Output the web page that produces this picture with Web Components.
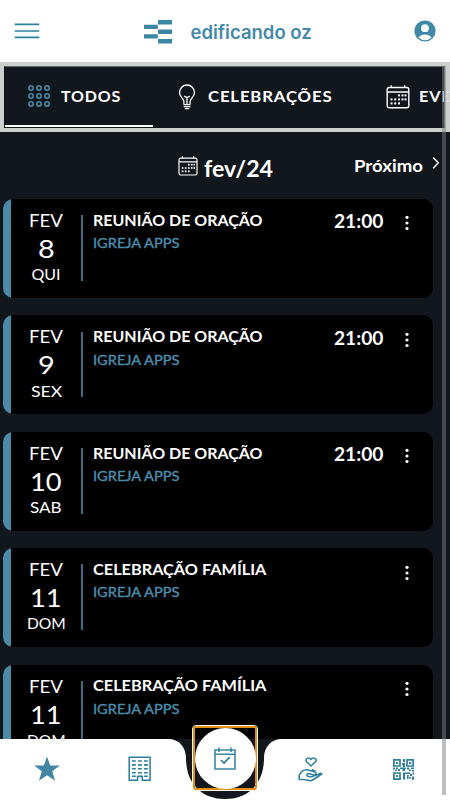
<!DOCTYPE html>
<html lang="pt-BR">
<head>
<meta charset="utf-8">
<title>edificando oz</title>
<style>
html,body{margin:0;height:100%;overflow:hidden;background:#12171e}
</style>
</head>
<body>
<agenda-app></agenda-app>
<script>
const ICONS = {
  menu: ['0 0 26 16', '<path d="M.7 1.4H25.3M.7 8H25.3M.7 14.4H25.3" stroke="#2c819f" stroke-width="1.7"/>'],
  logo: ['0 0 28 24', '<path d="M14 0h14v4.5H14zM0 4.8h13.8v4.3H0zM14 9.6h14v4.4H14zM0 14.2h13.8v4.3H0zM14 19h14v4.4H14z" fill="#3b87a3"/>'],
  user: ['0 0 22 22', '<defs><clipPath id="c"><circle cx="11" cy="11" r="9.2"/></clipPath></defs><circle cx="11" cy="11" r="10.6" fill="#3d89a6"/><g clip-path="url(#c)" fill="#fff"><circle cx="11" cy="8.2" r="3.9"/><ellipse cx="11" cy="19" rx="7.2" ry="4.4"/></g>'],
  grid: ['0 0 22 22', [3,11,19].map(y=>[3,11,19].map(x=>`<circle cx="${x}" cy="${y}" r="2.2" fill="none" stroke="#4b8eac" stroke-width="1.5"/>`).join('')).join('')],
  bulb: ['0 0 18 26', '<path d="M5.9 20V17.5C5.8 14.500 1.500 12.700 1.500 8.500A7.400 7.400 0 0 1 16.500 8.500C16.500 12.700 12.200 14.500 12.100 17.500V20M9 20V13.500M6.200 12.200 9 13.600 11.800 12.200" fill="none" stroke="#fff" stroke-width="1.3"/><path d="M5.500 20.600H12.500M5.700 22.700H12.300M6.800 24.600H11.200" stroke="#fff" stroke-width="1.300"/>'],
  calendar: ['0 0 24 24', '<rect x="1.200" y="2.500" width="21.600" height="20.300" rx="2" fill="none" stroke="#fff" stroke-width="1.400"/><path d="M1 7H23M5.200 .3V3M18.800 .3V3" stroke="#fff" stroke-width="1.300"/><g fill="#fff">' + [[13,10],[16.500,10],[19.500,10],[5.500,14],[9.200,14],[13,14],[16.500,14],[19.500,14],[5.500,18],[9.200,18],[13,18]].map(p=>`<rect x="${p[0]-1}" y="${p[1]-.6}" width="2" height="2"/>`).join('') + '</g>'],
  next: ['0 0 8 14', '<path d="M1.200 1.500 6.300 6.800 1.200 12.200" fill="none" stroke="#fff" stroke-width="1.400"/>'],
  dots: ['0 0 4 16', '<g fill="#fff"><circle cx="2" cy="2.300" r="1.600"/><circle cx="2" cy="8" r="1.600"/><circle cx="2" cy="13.500" r="1.600"/></g>'],
  star: ['0 0 26 26', '<path d="M13 .5 16.200 9.500H25.800L18.300 15.300 21 24.800 13 19.300 5 24.800 7.700 15.300 .2 9.500H9.800Z" fill="#4386a3"/>'],
  building: ['0 0 24 26', '<path d="M1.200 1.200H22.100V24.300H14.300V20.500H9.500V24.300H1.200Z" fill="none" stroke="#2b7e9d" stroke-width="1.500"/>' + [5,8.900,12.800,16.700,20.300].map(y=>`<path d="M4 ${y}H7.800M10 ${y}H13.800M16 ${y}H19.800" stroke="#2b7e9d" stroke-width="1.600"/>`).join('')],
  check: ['0 0 22 23', '<path d="M1 3H21V22H1ZM1 7.200H21M5 .5V5M17 .5V5" fill="none" stroke="#3d88a5" stroke-width="1.600"/><path d="m6.800 13 3.200 3.100L15.800 10" fill="none" stroke="#2c7e9d" stroke-width="1.700"/>'],
  hand: ['0 0 25 25', '<path d="M13 9 8.700 5C7 3 8.700 1 10.600 1 12 1 13 2.500 13 2.500S14 1 15.600 1C17.500 1 19 3 17.300 5ZM1.200 18.500V22.500H5C8 22 10 24.200 13 23.700 17 22 20 19.500 23.800 17L22.500 16.300 17 18.800M1.200 18.500C3 14.500 5.500 12.500 9 12.800L16.500 14.800C19 16 18 18.300 16 18L10.500 16.500C8 17 8.500 19.300 11 19.700 14 20 16.500 19.500 17.500 17.200M14 12.500 17.500 14.500" fill="none" stroke="#34829f" stroke-width="1.600" stroke-linejoin="round"/>'],
  qr: ['0 0 21 21', '<g fill="none" stroke="#2b7e9d" stroke-width="1.700"><path d="M.9 .9H7V7H.9ZM14 .9H20.100V7H14ZM.9 14H7V20.100H.9Z"/></g><path fill="#2b7e9d" d="M3 3h2v2H3zM16 3h2v2h-2zM3 16h2v2H3zM10 0h2v3h-2zM9 4h3v2H9zM10 6h2v2h-2zM0 8.500h2v2H0zM3 8.500h2v1.500H3zM2 10.500h2V12H2zM5 10h2v2H5zM7 8.500h6V10H7zM9.500 10H12v2H9.500zM14 8.500h2v2h-2zM18 8.500h3v1.500h-3zM16 10.500h2V12h-2zM19 11h2v1.500h-2zM10 13.500h7V15h-7zM10 15h2v5.500h-2zM14 16h1.600v4H14zM17 15h2v2h-2zM19.500 13.500H21v2h-1.500zM16 18h2v1.500h-2zM19 17.500h2v3.300h-2z"/>']
};
customElements.define('app-icon', class extends HTMLElement {
  connectedCallback(){
    const [box, art] = ICONS[this.getAttribute('name')];
    const [, , w] = box.split(' ');
    const W = this.getAttribute('w') || w;
    this.attachShadow({mode:'open'}).innerHTML = `<style>:host{display:block;flex:none;width:${W}px;line-height:0}svg{display:block;width:100%;height:auto}</style><svg viewBox="${box}" fill="none">${art}</svg>`;
  }
});
/* Text label whose glyphs are stretched sideways to fill the requested width. */
customElements.define('fit-text', class extends HTMLElement {
  connectedCallback(){
    this.attachShadow({mode:'open'}).innerHTML = `<style>:host{display:block;flex:none;white-space:nowrap;width:${this.getAttribute('w')}px}span{display:inline-block;transform-origin:0 50%}</style><span><slot></slot></span>`;
    this.fit();
  }
  fit(){
    const s = this.shadowRoot.querySelector('span');
    s.style.transform = `scaleX(${this.getAttribute('w') / (s.offsetWidth || 1)})`;
  }
});
customElements.define('app-header', class extends HTMLElement {
  connectedCallback(){
    this.attachShadow({mode:'open'}).innerHTML = `<style>
    :host{display:flex;box-sizing:border-box;height:62px;padding:0 14px;background:#fff;align-items:center;justify-content:space-between}
    .brand{display:flex;align-items:center;gap:19px;color:#4489a7;font:600 18.500px/24px Inter,sans-serif;padding:0 0 0 1px}
    .brand app-icon{margin-top:1px}
    .brand fit-text{margin-top:2px}
    </style><app-icon name="menu"></app-icon><div class="brand"><app-icon name="logo"></app-icon><fit-text w="121">edificando oz</fit-text></div><app-icon name="user"></app-icon>`;
  }
});
customElements.define('category-tabs', class extends HTMLElement {
  connectedCallback(){
    this.attachShadow({mode:'open'}).innerHTML = `<style>
    :host{display:block;position:relative;height:71px;box-sizing:border-box;padding:5px 0 6px 5px;overflow:hidden;color:#fff;font:700 16px/20px Lato,sans-serif;letter-spacing:.8px}
    .row{display:flex;height:60px}
    .tab{display:flex;flex:none;box-sizing:border-box;align-items:center;padding:0 0 1px 23px;width:147.500px}
    .tab fit-text{margin:-1px 0 0 11px}
    .on{border-bottom:2px solid #fff;padding-bottom:0}
    .two{width:208px;padding-left:25.500px}.two fit-text{margin-left:12px}
    .three{padding-left:25px}.three fit-text{margin-left:9.500px}
    .frame{position:absolute;inset:0 0 1px 0;border:solid rgba(217,219,219,.94);border-width:4px 5px 4px 4px;box-sizing:border-box}
    .frame:before{content:"";position:absolute;inset:0;border:1px solid #646b6b;border-bottom-color:transparent;border-right-color:#777;border-left-color:#111}
    </style><div class="row"><div class="tab on"><app-icon name="grid"></app-icon><fit-text w="60">TODOS</fit-text></div>
    <div class="tab two"><app-icon name="bulb"></app-icon><fit-text w="124.500">CELEBRAÇÕES</fit-text></div>
    <div class="tab three"><app-icon name="calendar"></app-icon><fit-text w="79">EVENTOS</fit-text></div></div><div class="frame"></div>`;
  }
});
customElements.define('month-bar', class extends HTMLElement {
  connectedCallback(){
    this.attachShadow({mode:'open'}).innerHTML = `<style>
    :host{display:flex;height:66px;box-sizing:border-box;padding:22px 9px 0 178px;color:#fff;font:700 17.500px/24px Lato,sans-serif}
    .m{font-size:23.500px;line-height:28px;margin:-1px 81px 0 6px}
    .n{margin:-1px 9px 0 0}
    .c{margin-top:.5px}
    .x{margin-top:1px}
    </style><app-icon class="c" name="calendar" w="20"></app-icon><fit-text class="m" w="69">fev/24</fit-text><fit-text class="n" w="69">Próximo</fit-text><app-icon class="x" name="next"></app-icon>`;
  }
});
customElements.define('event-card', class extends HTMLElement {
  connectedCallback(){
    const a = k => this.getAttribute(k) || '';
    const dayW = a('day').length > 1 ? 32 : 17;
    this.attachShadow({mode:'open'}).innerHTML = `<style>
    :host{display:flex;flex:none;box-sizing:border-box;width:429.500px;height:98.800px;margin:0 0 17.600px 3px;padding-left:8px;border-radius:10px;background:linear-gradient(90deg,#4b8ba7 8px,#000 8px);color:#fff;font:400 17px/24px Lato,sans-serif}
    .date{width:70px;display:flex;flex-direction:column;align-items:center;padding-top:10px}
    .d{font-size:25.500px;line-height:30px}
    .w{font-size:16px;line-height:24px;margin-top:-.7px}
    .body{display:flex;flex:1;height:65.500px;margin-top:16.300px;border-left:2px solid #3b6e84;padding-left:10px}
    .info{flex:1}
    .t{font-size:16px;line-height:24px;font-weight:700;margin-top:-7.500px}
    .s{font-size:13.500px;line-height:22px;color:#4b8caa;-webkit-text-stroke:.4px #4b8caa;margin-top:.4px}
    .h{font-size:18px;font-weight:700;margin:-6px 22.500px 0 0}
    .k{margin:.2px 23.500px 0 0}
    </style><div class="date"><fit-text w="34">FEV</fit-text><fit-text class="d" w="${dayW}">${a('day')}</fit-text><fit-text class="w" w="${a('ww')}">${a('week')}</fit-text></div>
    <div class="body"><div class="info"><fit-text class="t" w="${a('tw')}"><slot></slot></fit-text><fit-text class="s" w="86.500">IGREJA APPS</fit-text></div>
    ${a('time') ? `<fit-text class="h" w="49">${a('time')}</fit-text>` : ''}<app-icon class="k" name="dots"></app-icon></div>`;
    this.shadowRoot.querySelector('.t').fit();
  }
});
customElements.define('bottom-nav', class extends HTMLElement {
  connectedCallback(){
    this.attachShadow({mode:'open'}).innerHTML = `<style>
    :host{position:absolute;left:0;right:0;bottom:0;height:61px}
    .bg{position:absolute;inset:0;width:450px;height:61px}
    .items{position:relative;display:grid;grid-template-columns:93px 93px 78px 93px 93px;height:60px;align-items:center;justify-items:center}
    .focus{position:absolute;left:192px;top:-14px;width:66px;height:66px;box-sizing:border-box;border:1px solid #fff;border-radius:4px}
    .focus:before{content:"";position:absolute;inset:0;border:2px solid #e28f13;border-radius:3px}
    .disc{position:absolute;inset:1.500px;border-radius:50%;background:#fff;display:flex;align-items:center;justify-content:center}
    </style><svg class="bg" viewBox="0 0 450 61"><rect width="450" height="61" fill="#12171e"/><path fill="#fff" d="M0 0H168C179 0 186 8 186 19C186 45 202 60 225 60C248 60 264 45 264 19C264 8 271 0 282 0H450V61H0Z"/></svg>
    <div class="items"><app-icon name="star"></app-icon><app-icon name="building"></app-icon><span></span><app-icon name="hand"></app-icon><app-icon name="qr"></app-icon></div>
    <div class="focus"><div class="disc"><app-icon name="check"></app-icon></div></div>`;
  }
});
customElements.define('agenda-app', class extends HTMLElement {
  connectedCallback(){
    this.attachShadow({mode:'open'}).innerHTML = `<style>
    :host{display:block;position:relative;width:450px;height:800px;overflow:hidden;background:#12171e}
    .bar{position:absolute;left:442px;top:66px;width:4px;height:729px;background:rgba(125,125,125,.5)}
    </style><app-header></app-header><category-tabs></category-tabs><month-bar></month-bar>
    <event-card day="8" week="QUI" ww="29" tw="170" time="21:00">REUNIÃO DE ORAÇÃO</event-card>
    <event-card day="9" week="SEX" ww="31" tw="170" time="21:00">REUNIÃO DE ORAÇÃO</event-card>
    <event-card day="10" week="SAB" ww="32" tw="170" time="21:00">REUNIÃO DE ORAÇÃO</event-card>
    <event-card day="11" week="DOM" ww="39" tw="173">CELEBRAÇÃO FAMÍLIA</event-card>
    <event-card day="11" week="DOM" ww="39" tw="173">CELEBRAÇÃO FAMÍLIA</event-card>
    <bottom-nav></bottom-nav><div class="bar"></div>`;
  }
});
</script>
</body>
</html>
